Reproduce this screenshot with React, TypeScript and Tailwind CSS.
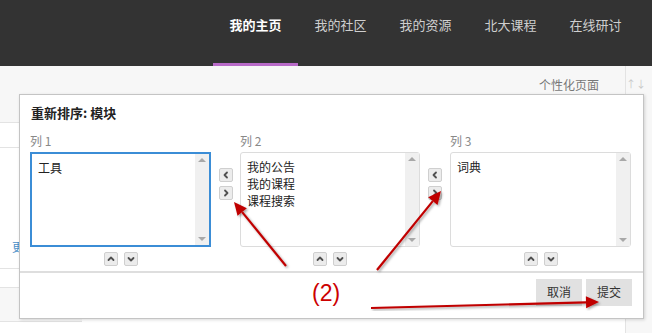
import React from 'react';

const nav = ['我的主页', '我的社区', '我的资源', '北大课程', '在线研讨'];

const Chevron: React.FC<{ dir: 'left' | 'right' | 'up' | 'down' }> = ({ dir }) => {
  const d = {
    left: 'M6 2.5 L3.5 5 L6 7.5',
    right: 'M4 2.5 L6.5 5 L4 7.5',
    up: 'M2.5 6 L5 3.5 L7.5 6',
    down: 'M2.5 4 L5 6.5 L7.5 4',
  }[dir];
  return (
    <svg width="10" height="10" viewBox="0 0 10 10">
      <path d={d} fill="none" stroke="#505050" strokeWidth="1.8" strokeLinecap="round" strokeLinejoin="round" />
    </svg>
  );
};

const SmallBtn: React.FC<{ dir: 'left' | 'right' | 'up' | 'down' }> = ({ dir }) => (
  <button className="w-[14px] h-[14px] flex items-center justify-center bg-[#ececec] border border-[#cfcfcf] rounded-[2px] p-0">
    <Chevron dir={dir} />
  </button>
);

const ListBox: React.FC<{ items: string[]; focused?: boolean }> = ({ items, focused }) => (
  <div className="flex flex-col">
    <div
      className={
        focused
          ? 'h-[95px] flex border-2 border-[#3b8dd6] bg-white'
          : 'h-[95px] flex border border-[#dcdcdc] rounded-[3px] bg-white'
      }
    >
      <div className="flex-1 pl-[6px] pt-[5px] text-[12px] leading-[17px] text-[#222]">
        {items.map(t => (
          <div key={t}>{t}</div>
        ))}
      </div>
      <div className="w-[14px] bg-[#f0f0f0] flex flex-col justify-between items-center py-[4px]">
        <div className="w-0 h-0 border-l-[4px] border-r-[4px] border-b-[4px] border-l-transparent border-r-transparent border-b-[#a8a8a8]" />
        <div className="w-0 h-0 border-l-[4px] border-r-[4px] border-t-[4px] border-l-transparent border-r-transparent border-t-[#a8a8a8]" />
      </div>
    </div>
    <div className="flex justify-center gap-[6px] mt-[5px]">
      <SmallBtn dir="up" />
      <SmallBtn dir="down" />
    </div>
  </div>
);

const MoveBtns: React.FC = () => (
  <div className="flex flex-col items-center gap-[4px] pt-[16px]">
    <SmallBtn dir="left" />
    <SmallBtn dir="right" />
  </div>
);

const Arrow: React.FC<{ x1: number; y1: number; x2: number; y2: number }> = ({ x1, y1, x2, y2 }) => {
  const a = Math.atan2(y2 - y1, x2 - x1);
  const len = 13;
  const w = 6;
  const bx = x2 - Math.cos(a) * len;
  const by = y2 - Math.sin(a) * len;
  const px = -Math.sin(a) * w;
  const py = Math.cos(a) * w;
  return (
    <g filter="url(#sh)">
      <line x1={x1} y1={y1} x2={bx} y2={by} stroke="#c00000" strokeWidth="2.2" />
      <polygon points={`${x2},${y2} ${bx + px},${by + py} ${bx - px},${by - py}`} fill="#c00000" />
    </g>
  );
};

export default function App() {
  return (
    <div
      className="relative w-[652px] h-[333px] overflow-hidden bg-[#f7f7f7]"
      style={{ fontFamily: '"Noto Sans CJK SC", "Open Sans", sans-serif' }}
    >
      {/* Header */}
      <div className="h-[66px] bg-[#333333] flex pl-[213px]">
        {nav.map((n, i) => (
          <div key={n} className="w-[85px] flex flex-col items-center justify-between">
            <span
              className={
                i === 0
                  ? 'mt-[15px] text-[13px] font-bold text-white'
                  : 'mt-[15px] text-[13px] text-[#cfcfcf]'
              }
            >
              {n}
            </span>
            {i === 0 && <div className="w-full h-[3px] bg-[#b86ac8]" />}
          </div>
        ))}
      </div>

      {/* Page behind */}
      <div className="flex h-[267px]">
        <div className="w-[83px] flex flex-col bg-white">
          <div className="h-[57px] bg-[#f7f7f7] border-b border-[#e3e3e3]" />
          <div className="h-[25px] border-b border-[#e3e3e3]" />
          <div className="h-[121px] border-b border-[#e3e3e3] flex items-end pb-[12px] pl-[12px]">
            <span className="text-[12px] text-[#4a90c8]">更多</span>
          </div>
          <div className="h-[19px] border-b border-[#e3e3e3]" />
          <div className="h-[34px] bg-[#f7f7f7] border-b border-[#e3e3e3]" />
        </div>
        <div className="w-[552px] flex flex-col bg-white border-r border-[#e3e3e3]">
          <div className="h-[34px] bg-[#f7f7f7] flex items-start justify-end pr-[26px] pt-[10px]">
            <span className="text-[12px] text-[#777]">个性化页面</span>
          </div>
        </div>
        <div className="flex-1 flex justify-end pt-[13px] pr-[6px]">
          <span className="text-[10px] text-[#c8c8c8] leading-none">↑↓</span>
        </div>
      </div>

      {/* Dialog */}
      <div className="absolute left-[19px] top-[94px] w-[625px] h-[225px] bg-white border border-[#c4c4c4] shadow-[1px_1px_3px_rgba(0,0,0,0.15)] flex flex-col">
        <div className="px-[11px] pt-[8px] text-[13px] font-bold text-[#222]">重新排序: 模块</div>
        <div className="grid grid-cols-[181px_29px_180px_30px_181px] pl-[10px] mt-[10px]">
          <div className="text-[12px] text-[#888] leading-[16px] mb-[3px]">列 1</div>
          <div />
          <div className="text-[12px] text-[#888] leading-[16px]">列 2</div>
          <div />
          <div className="text-[12px] text-[#888] leading-[16px]">列 3</div>
          <ListBox items={['工具']} focused />
          <MoveBtns />
          <ListBox items={['我的公告', '我的课程', '课程搜索']} />
          <MoveBtns />
          <ListBox items={['词典']} />
        </div>
        <div className="mt-[5px] border-t-2 border-[#dedede] flex justify-end gap-[4px] pr-[11px] pt-[6px]">
          <button className="w-[46px] h-[27px] bg-[#e1e1e1] text-[12px] text-[#333]">取消</button>
          <button className="w-[46px] h-[27px] bg-[#e1e1e1] text-[12px] text-[#333]">提交</button>
        </div>
      </div>

      {/* Annotations */}
      <svg className="absolute inset-0 pointer-events-none" width="652" height="333">
        <defs>
          <filter id="sh" x="-20%" y="-20%" width="140%" height="140%">
            <feDropShadow dx="1.5" dy="1.5" stdDeviation="1.2" floodColor="#000" floodOpacity="0.35" />
          </filter>
        </defs>
        <Arrow x1={286} y1={266} x2={234} y2={202} />
        <Arrow x1={377} y1={270} x2={441} y2={191} />
        <Arrow x1={371} y1={308} x2={599} y2={302} />
      </svg>
      <div
        className="absolute left-[312px] top-[279px] text-[23px] leading-[28px] text-[#cc0000]"
        style={{ fontFamily: '"Liberation Sans", Arial, sans-serif' }}
      >
        (2)
      </div>
    </div>
  );
}
